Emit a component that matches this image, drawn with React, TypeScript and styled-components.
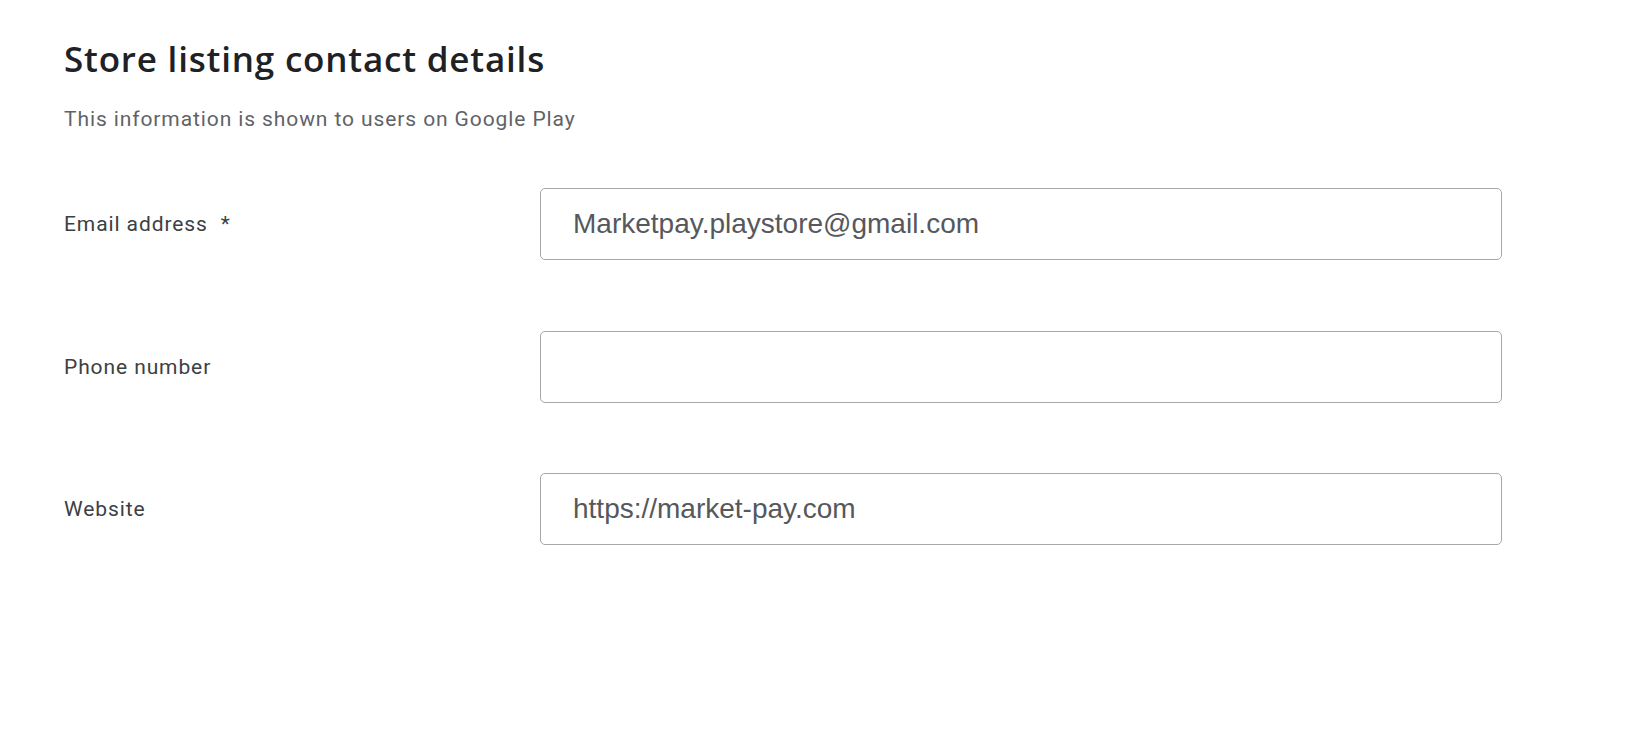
import styled, { createGlobalStyle } from "styled-components";

const fields = [
  { label: "Email address", required: true, value: "Marketpay.playstore@gmail.com" },
  { label: "Phone number", required: false, value: "" },
  { label: "Website", required: false, value: "https://market-pay.com" },
];

const App = () => {
  return (
    <>
      <GlobalStyle />
      <Page>
        <Title>Store listing contact details</Title>
        <Subtitle>This information is shown to users on Google Play</Subtitle>
        <Form>
          {fields.map((field) => (
            <Row key={field.label}>
              <Label>
                {field.label}
                {field.required && <Required>*</Required>}
              </Label>
              <Input defaultValue={field.value} />
            </Row>
          ))}
        </Form>
      </Page>
    </>
  );
};

export default App;

const GlobalStyle = createGlobalStyle`
  body {
    margin: 0;
    background: #ffffff;
    font-family: Roboto, "Liberation Sans", sans-serif;
  }
`;

const Page = styled.div`
  padding: 37px 0 0 64px;
  width: 1438px;
`;

const Title = styled.h1`
  margin: 0;
  font-family: "Open Sans", Roboto, sans-serif;
  font-size: 35px;
  font-weight: 600;
  line-height: 44px;
  color: #202124;
  letter-spacing: 0.8px;
`;

const Subtitle = styled.div`
  margin-top: 24px;
  font-size: 21px;
  line-height: 28px;
  color: #5f6368;
  letter-spacing: 0.9px;
`;

const Form = styled.div`
  margin-top: 55px;
  display: flex;
  flex-direction: column;
  gap: 70.5px;
`;

const Row = styled.div`
  display: grid;
  grid-template-columns: 476px 962px;
  align-items: center;
`;

const Label = styled.label`
  font-size: 21px;
  color: #3c4043;
  letter-spacing: 0.9px;
  display: flex;
  align-items: center;
`;

const Required = styled.span`
  margin-left: 13px;
`;

const Input = styled.input`
  box-sizing: border-box;
  height: 72px;
  width: 100%;
  padding: 0 32px;
  border: 1.5px solid #a5a7aa;
  border-radius: 5px;
  font-family: "Liberation Sans", Arial, sans-serif;
  font-size: 28px;
  color: #55585c;
  background: #ffffff;
  outline: none;
`;
